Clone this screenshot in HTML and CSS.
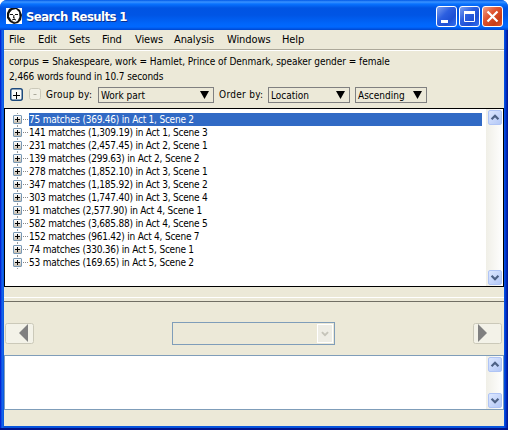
FILE: index.html
```html
<!DOCTYPE html>
<html lang="en"><head><meta charset="utf-8"><title>Search Results 1</title><link rel="stylesheet" href="styles.css"></head>
<body>
<div class="window">
<header class="titlebar">
<svg class="portrait" width="16" height="16" viewBox="0 0 16 16"><path fill="#fff" d="M0 0h16v16H0z"/><path fill="#111" d="M5 0h6l3 2 2 5-1 5-3 3-4 1-4-2-3-4V5l2-4z"/><path fill="#fff" d="M6 2 10 1l3 3 .5 5-2 4-3 1.500-3-2-2.500-4 .5-4z"/><path fill="none" stroke="#111" d="M4 6.500h3M9 6.500h3M8 7l-.5 3H9M6 12l2-.7 2 .7M8 13.500v1.500M2 9l2 4M5 2 3 5"/></svg>
<h1>Search Results 1</h1>
<div class="buttons">
<svg class="wb" viewBox="0 0 19 19"><path fill="#fff" d="M4 13h7v3H4z"/></svg>
<svg class="wb" viewBox="0 0 19 19"><path fill="none" stroke="#fff" d="M4.500 4.500h10v10h-10z"/><path fill="#fff" d="M4 4h11v3H4z"/></svg>
<svg class="wb close" viewBox="0 0 19 19"><path stroke="#fff" stroke-width="2.200" d="m4.500 4.500 10 10m0-10-10 10"/></svg>
</div>
</header>
<div class="client">
<nav class="menu"><span class="m1">File</span><span class="m2">Edit</span><span class="m3">Sets</span><span class="m4">Find</span><span class="m5">Views</span><span class="m6">Analysis</span><span class="m7">Windows</span><span class="m8">Help</span></nav>
<div class="info"><p><span class="query">corpus = Shakespeare, work = Hamlet, Prince of Denmark, speaker gender = female</span></p><p><span class="count">2,466 words found in 10.7 seconds</span></p></div>
<div class="controls">
<svg class="tool" width="13" height="13" viewBox="0 0 13 13"><rect x=".75" y=".75" width="11.500" height="11.500" rx="2" fill="#fafaf7" stroke="#1d4a7c" stroke-width="1.500"/><path stroke="#000" d="M3 7.500h7M6.500 4v7"/></svg>
<svg class="tool minus" width="13" height="13" viewBox="0 0 13 13"><rect x=".5" y=".5" width="11" height="11" rx="2" fill="#f1f0e5" stroke="#cbc9b9"/><path stroke="#aaa99b" d="M4.500 6.500h3"/></svg>
<label class="group">Group by:</label><div class="select s1"><span>Work part</span><i></i></div>
<label class="order">Order by:</label><div class="select s2"><span>Location</span><i></i></div>
<div class="select s3"><span>Ascending</span><i></i></div>
</div>
<main class="results">
<ul class="tree">
<li class="on"><b></b><span>75 matches (369.46) in Act 1, Scene 2</span></li>
<li><b></b><span>141 matches (1,309.19) in Act 1, Scene 3</span></li>
<li><b></b><span>231 matches (2,457.45) in Act 2, Scene 1</span></li>
<li><b></b><span>139 matches (299.63) in Act 2, Scene 2</span></li>
<li><b></b><span>278 matches (1,852.10) in Act 3, Scene 1</span></li>
<li><b></b><span>347 matches (1,185.92) in Act 3, Scene 2</span></li>
<li><b></b><span>303 matches (1,747.40) in Act 3, Scene 4</span></li>
<li><b></b><span>91 matches (2,577.90) in Act 4, Scene 1</span></li>
<li><b></b><span>582 matches (3,685.88) in Act 4, Scene 5</span></li>
<li><b></b><span>152 matches (961.42) in Act 4, Scene 7</span></li>
<li><b></b><span>74 matches (330.36) in Act 5, Scene 1</span></li>
<li><b></b><span>53 matches (169.65) in Act 5, Scene 2</span></li>
</ul>
<div class="scroll"><svg viewBox="0 0 14 15"><path d="m3 9.500 4-4 4 4"/></svg><svg viewBox="0 0 14 15"><path d="m3 5.500 4 4 4-4"/></svg></div>
</main>
<div class="splitter"></div>
<div class="pager">
<svg class="nav" width="29" height="22" viewBox="0 0 29 22"><rect x=".5" y=".5" width="28" height="20" rx="2" fill="#f3f2e8" stroke="#cbc9b9"/><path fill="#808080" d="M23 1v18l-9-9z"/></svg>
<div class="combo"><svg width="16" height="19" viewBox="0 0 16 19"><path fill="none" stroke="#c5c4ba" stroke-width="2.200" d="m4.500 8 3.500 3.500 3.500-3.500"/></svg></div>
<svg class="nav" width="29" height="22" viewBox="0 0 29 22"><rect x=".5" y=".5" width="28" height="20" rx="2" fill="#f3f2e8" stroke="#cbc9b9"/><path fill="#808080" d="M5 1v18l9-9z"/></svg>
</div>
<div class="text"><div class="scroll"><svg viewBox="0 0 14 15"><path d="m3 9.500 4-4 4 4"/></svg><svg viewBox="0 0 14 15"><path d="m3 5.500 4 4 4-4"/></svg></div></div>
</div>
</div>
</body></html>
```
FILE: styles.css
```css
*{box-sizing:border-box}
body{margin:0;background:#fff;font:10px/13px "DejaVu Sans Condensed","DejaVu Sans",sans-serif;font-stretch:condensed;color:#000;white-space:nowrap;overflow:hidden}
.window{width:508px;height:430px;padding:0 4px 4px;background:linear-gradient(90deg,#0019cf,#0831d9 1px,#166aee 2px,#0855dd 4px,#0855dd 504px,#0046e0 505px,#0030c4 506px,#00138c);border-bottom:2px solid #00138c;border-radius:7px 7px 0 0;overflow:hidden}
.titlebar{height:30px;margin:0 -4px;padding:0 6px;display:flex;align-items:center;background:linear-gradient(#0058e6 0,#3a93ff 2px,#0872ff 4px,#0054e3 8px,#0055e5 15px,#0066fb 24px,#0068ff 27px,#0046cf 30px)}
.portrait{margin-top:2px}
h1{margin:4px 0 0 4px;font-size:13px;line-height:20px;font-weight:bold;color:#fff;letter-spacing:-.6px;text-shadow:1px 1px #0a2f8c}
.buttons{margin:3px -1px 0 auto;display:flex;gap:2px}
.wb{width:21px;height:21px;border:1px solid #fff;border-radius:3px;background:linear-gradient(135deg,#7b9ff0,#2c5fe0 40%,#1d4fd4 70%,#3471f2)}
.close{background:linear-gradient(135deg,#f0a089,#e0532f 40%,#c93d17 75%,#e15a33)}
.client{height:396px;background:#ece9d8}
.menu{display:flex;height:21px;border-bottom:1px solid #fff;box-shadow:inset 0 -1px #aca899;font-size:11px;line-height:19px;padding-left:5px}
.menu span{letter-spacing:-.1px}
.m1{width:29px}.m2{width:31px}.m3{width:33px}.m4{width:33px}.m5{width:39px}.m6{width:53px}.m7{width:55px}
.info{height:36px;padding:3px 0 0 5px}
.info p{margin:0;height:15px;line-height:15px}
.query{letter-spacing:-.04px}.count{letter-spacing:-.1px}
.controls{display:flex;height:21px;padding-left:6px}
.tool{margin-top:1px}.minus{margin-left:6px}
.group,.order{line-height:16px;letter-spacing:.3px}
.group{margin-left:4px;width:52px}
.order{margin-left:5px;width:49px}
.select{height:16px;border:1px solid #808080;display:flex;justify-content:space-between;line-height:16px;padding:0 4px 0 2px}
.select i{width:9px;height:8px;margin-top:3px;background:#000;clip-path:polygon(0 0,100% 0,50% 100%)}
.s1{width:116px}.s2{width:82px}.s3{width:72px;margin-left:5px}
.results{height:179px;border:1px solid #000;background:#fff;display:flex}
.tree{list-style:none;margin:4px 0 0;padding:0 4px 0 7px;width:481px}
.tree li{height:13px;display:flex;align-items:center;padding-left:1px;letter-spacing:-.22px}
.tree b{width:9px;height:9px;border:1px solid #7898b5;border-radius:1px;background:linear-gradient(#000,#000) 1px 3px/5px 1px no-repeat,linear-gradient(#000,#000) 3px 1px/1px 5px no-repeat,linear-gradient(#fff,#c6beb0)}
.tree b::after{content:"";display:block;margin:3px 0 0 9px;width:5px;border-top:1px dotted #888}
.tree span{margin-left:7px;height:13px;line-height:14px;flex:1}
.tree li{background:repeating-linear-gradient(#999 0 1px,transparent 1px 2px) 5px 0/1px 100% no-repeat}
.on span{background:#316ac5;color:#fff}
.scroll{width:17px;padding:1px 1px 1px 2px;display:flex;flex-direction:column;justify-content:space-between;background:linear-gradient(90deg,#f0efe7,#fff)}
.scroll svg{width:14px;height:15px;border:1px solid #afc4f5;border-radius:2px;background:linear-gradient(135deg,#dce7ff,#b4c8f6)}
.scroll path{fill:none;stroke:#4d6185;stroke-width:2.600}
.splitter{height:15px;border-bottom:1px solid #716f64;background:linear-gradient(transparent 10px,#fff 10px 11px,transparent 11px)}
.pager{height:53px;padding:20px 2px 0 1px;display:flex;justify-content:space-between}
.nav{margin-top:1px}
.combo{width:163px;height:23px;border:1px solid #7f9db9;display:flex;justify-content:flex-end;padding:1px}
.combo svg{background:#eeede5;border:1px solid #fff}
.text{height:55px;border:1px solid #7f9db9;background:#fff;display:flex;justify-content:flex-end}
```
